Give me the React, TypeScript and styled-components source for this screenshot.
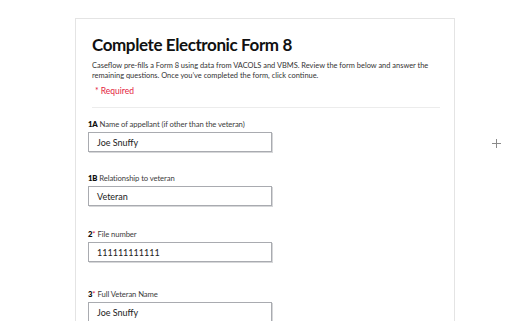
import React from "react";
import styled, { createGlobalStyle } from "styled-components";

const Global = createGlobalStyle`
  html, body { margin: 0; padding: 0; background: #ffffff; overflow: hidden; }
  body { font-family: "Lato", "Open Sans", sans-serif; color: #212121; }
`;

const Page = styled.div`
  display: flex;
  align-items: flex-start;
  padding: 18px 0 0 75px;
  height: 321px;
  box-sizing: border-box;
  overflow: hidden;
`;

const Card = styled.main`
  width: 380px;
  height: 303px;
  box-sizing: border-box;
  border: 1px solid #e4e4e4;
  border-bottom: none;
  padding: 14px 14px 0 16px;
  overflow: hidden;
`;

const Title = styled.h1`
  margin: 0;
  font-size: 17px;
  line-height: 24px;
  font-weight: 700;
  color: #111;
  letter-spacing: -0.4px;
`;

const Intro = styled.p`
  margin: 4px 0 0;
  font-size: 7.45px;
  line-height: 10px;
  color: #333;
`;

const Required = styled.div`
  margin: 4px 0 0 3px;
  font-size: 8.5px;
  line-height: 12px;
  color: #e31c3d;
`;

const Divider = styled.hr`
  margin: 10px 0 0;
  border: none;
  border-top: 1px solid #ececec;
  width: 348px;
`;

const Fields = styled.div`
  margin-left: -4px;
  display: flex;
  flex-direction: column;
`;

const Field = styled.div<{ $top: number }>`
  margin-top: ${(p) => p.$top}px;
  display: flex;
  flex-direction: column;
`;

const Label = styled.label`
  font-size: 7.7px;
  line-height: 10px;
  color: #3d3d3d;
  letter-spacing: -0.1px;
`;

const Num = styled.b`
  font-weight: 800;
  color: #111;
`;

const Star = styled.span`
  color: #e31c3d;
  margin-right: 2px;
`;

const Input = styled.div`
  margin-top: 3px;
  width: 184px;
  height: 20px;
  box-sizing: border-box;
  border: 1px solid #a9abb0;
  box-shadow: 1px 1px 0 #d6d7d9;
  padding-left: 8px;
  display: flex;
  align-items: center;
  font-size: 9px;
  color: #222;
`;

const Plus = styled.div`
  margin: 121px 0 0 37px;
  width: 9px;
  height: 9px;
  position: relative;
  &::before, &::after {
    content: "";
    position: absolute;
    background: #8a8a8a;
  }
  &::before { left: 4px; top: 0; width: 1px; height: 9px; }
  &::after { top: 4px; left: 0; height: 1px; width: 9px; }
`;

const fields = [
  { num: "1A", req: false, label: "Name of appellant (if other than the veteran)", value: "Joe Snuffy", top: 11 },
  { num: "1B", req: false, label: "Relationship to veteran", value: "Veteran", top: 21 },
  { num: "2", req: true, label: "File number", value: "111111111111", top: 23 },
  { num: "3", req: true, label: "Full Veteran Name", value: "Joe Snuffy", top: 27 },
];

export default function App() {
  return (
    <>
      <Global />
      <Page>
        <Card>
          <Title>Complete Electronic Form 8</Title>
          <Intro>
            Caseflow pre-fills a Form 8 using data from VACOLS and VBMS. Review the form below and answer the
            remaining questions. Once you’ve completed the form, click continue.
          </Intro>
          <Required>* Required</Required>
          <Divider />
          <Fields>
            {fields.map((f) => (
              <Field key={f.num} $top={f.top}>
                <Label>
                  <Num>{f.num}</Num>
                  {f.req ? <Star>*</Star> : " "}
                  {f.label}
                </Label>
                <Input>{f.value}</Input>
              </Field>
            ))}
          </Fields>
        </Card>
        <Plus />
      </Page>
    </>
  );
}
